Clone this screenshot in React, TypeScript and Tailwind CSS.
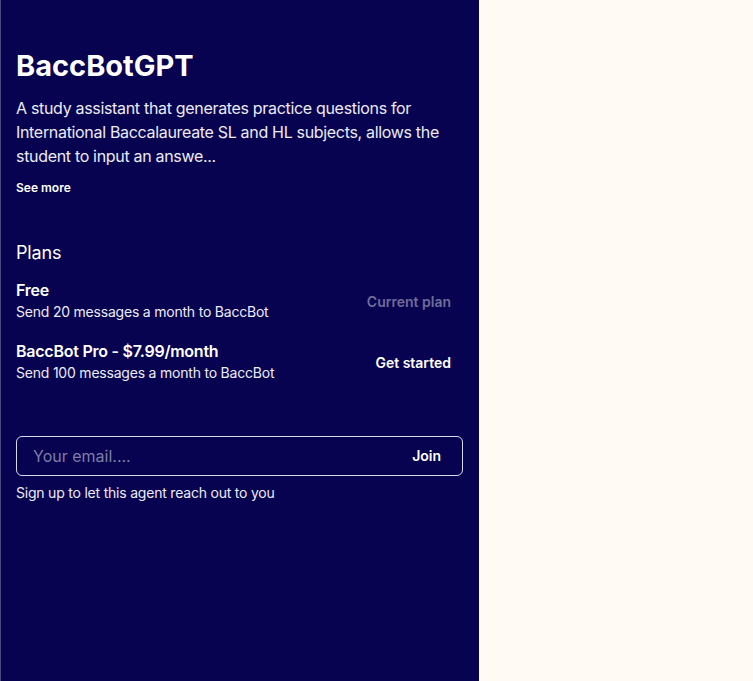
import * as React from "react";

const plans = [
  { name: "Free", desc: "Send 20 messages a month to BaccBot", action: "Current plan", current: true },
  { name: "BaccBot Pro - $7.99/month", desc: "Send 100 messages a month to BaccBot", action: "Get started", current: false },
];

export default function App() {
  const [email, setEmail] = React.useState("");

  return (
    <div
      className="flex h-[681px] w-full bg-[#fffaf3]"
      style={{ fontFamily: "Inter, 'Noto Sans', sans-serif" }}
    >
      <aside className="flex w-[479px] shrink-0 flex-col border-l border-[#4a4780] bg-[#070350] pl-[15px] pr-4 pt-[48px] text-white">
        <h1 className="text-[29px] font-bold leading-[36px]">BaccBotGPT</h1>
        <p className="mt-[12px] text-base leading-6 tracking-[-0.02em] text-[#ecebf5]">
          A study assistant that generates practice questions for International Baccalaureate SL and
          HL subjects, allows the student to input an answe...
        </p>
        <button type="button" className="mt-[12px] self-start text-xs font-semibold leading-4">
          See more
        </button>

        {/* Plans */}
        <h2 className="mt-[43px] text-lg leading-7 tracking-[-0.01em]">Plans</h2>
        <ul className="mt-[11px] flex flex-col gap-[17px]">
          {plans.map((p) => (
            <li key={p.name} className="flex items-center justify-between">
              <div>
                <div className="text-base font-semibold leading-6 tracking-[-0.015em]">{p.name}</div>
                <div className="text-sm leading-5 tracking-[-0.015em] text-[#ecebf5]">{p.desc}</div>
              </div>
              <button
                type="button"
                disabled={p.current}
                className={
                  p.current
                    ? "mt-[3px] px-3 text-sm font-semibold text-[#6f6c99]"
                    : "mt-[3px] px-3 text-sm font-semibold text-white"
                }
              >
                {p.action}
              </button>
            </li>
          ))}
        </ul>

        {/* Email signup */}
        <form
          className="mt-[53px] flex h-10 items-center rounded-md border border-[#d9d8e6]"
          onSubmit={(e) => e.preventDefault()}
        >
          <input
            value={email}
            onChange={(e) => setEmail(e.target.value)}
            placeholder="Your email...."
            className="min-w-0 flex-1 bg-transparent pl-4 text-base text-white outline-none placeholder:text-[#7f7da6]"
          />
          <button type="submit" className="px-[21px] text-sm font-semibold">
            Join
          </button>
        </form>
        <p className="mt-[7px] text-sm leading-5 tracking-[-0.015em] text-[#ecebf5]">
          Sign up to let this agent reach out to you
        </p>
      </aside>
      <main className="flex-1" />
    </div>
  );
}
